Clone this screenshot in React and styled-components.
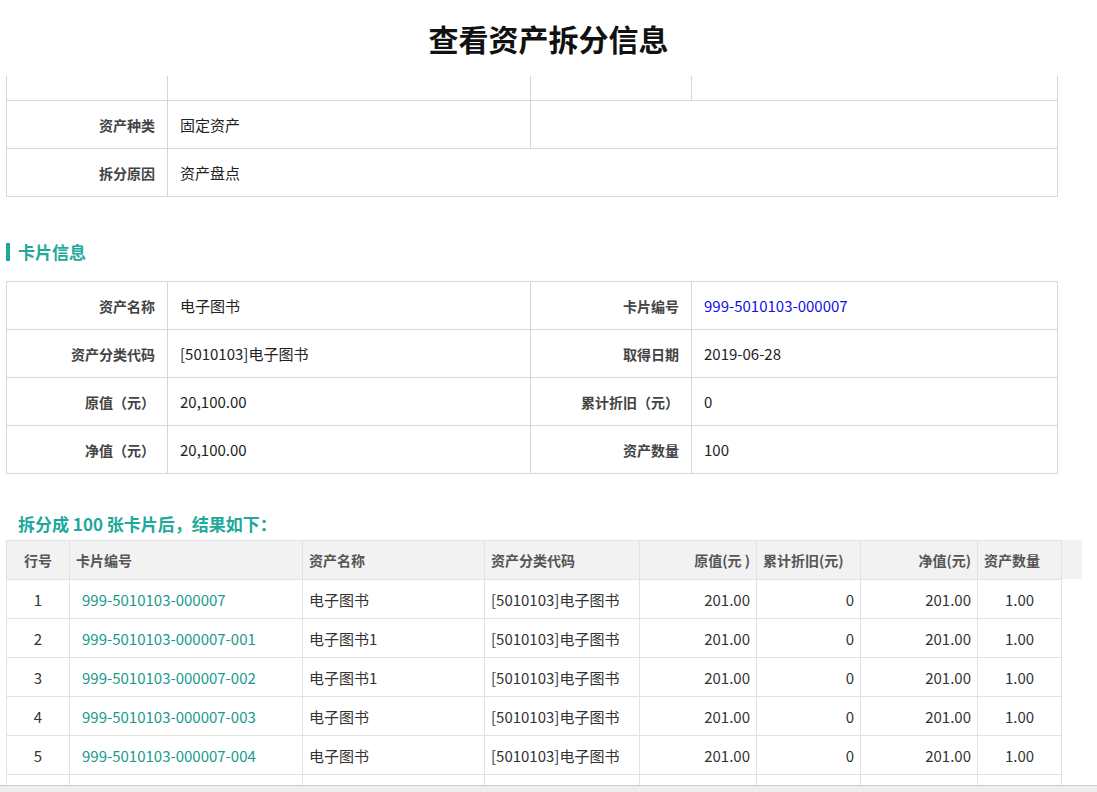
import React from 'react';
import styled, { createGlobalStyle } from 'styled-components';

const Global = createGlobalStyle`
  html, body { margin: 0; padding: 0; background: #fff; overflow: hidden; }
  body { font-family: "Microsoft YaHei", "Noto Sans CJK SC", "Noto Sans", sans-serif; color: #333; }
`;

const Page = styled.div`
  width: 1097px;
  height: 792px;
  display: flex;
  flex-direction: column;
  overflow: hidden;
`;

const Header = styled.h1`
  margin: 0;
  height: 76px;
  flex: none;
  display: flex;
  align-items: center;
  justify-content: center;
  font-size: 30px;
  font-weight: 700;
  color: #111;
`;

const Scroller = styled.div`
  flex: 1;
  overflow: hidden;
  padding: 0 0 0 6px;
`;

const Inner = styled.div`
  margin-top: -24px;
`;

const FormTable = styled.table`
  width: 1051px;
  border-collapse: collapse;
  table-layout: fixed;
  font-size: 15px;
  & td { border: 1px solid #d6d6d6; height: 47px; padding: 0 12px; }
`;

const Label = styled.td`
  text-align: right;
  font-weight: 700;
  color: #444;
  font-size: 14px;
`;

const Value = styled.td`
  color: ${p => (p.$link ? '#1010e0' : '#222')};
`;

const SectionTitle = styled.div`
  display: flex;
  align-items: center;
  gap: 8px;
  margin: ${p => p.$m || '42px 0 17px'};
  color: #20a99b;
  font-weight: 700;
  font-size: 17px;
  &::before {
    content: '';
    display: ${p => (p.$bar ? 'block' : 'none')};
    width: 4px;
    height: 18px;
    background: #20a99b;
  }
  padding-left: ${p => (p.$bar ? 0 : '12px')};
`;

const GridWrap = styled.div`
  display: flex;
  align-items: flex-start;
`;

const Grid = styled.table`
  border-collapse: collapse;
  table-layout: fixed;
  font-size: 15px;
  & th, & td { border: 1px solid #e2e2e2; height: 38px; padding: 0 6px; }
  & th { background: #f2f2f2; color: #555; font-weight: 700; text-align: left; font-size: 14px; }
`;

const Gutter = styled.div`
  width: 20px;
  height: 39px;
  background: #f2f2f2;
`;

const Cell = styled.td`
  text-align: ${p => p.$align || 'left'};
  color: ${p => (p.$link ? '#169a8c' : '#333')};
  padding-left: ${p => (p.$link ? '12px' : '6px')} !important;
`;

const HCell = styled.th`
  text-align: ${p => p.$align || 'left'} !important;
`;

const Pager = styled.div`
  height: 6px;
  background: #eee;
  border-top: 1px solid #ccc;
`;

const cols = [63, 233, 182, 155, 117, 104, 117, 84];
const rows = [
  ['1', '999-5010103-000007', '电子图书'],
  ['2', '999-5010103-000007-001', '电子图书1'],
  ['3', '999-5010103-000007-002', '电子图书1'],
  ['4', '999-5010103-000007-003', '电子图书'],
  ['5', '999-5010103-000007-004', '电子图书'],
];

export default function App() {
  return (
    <Page>
      <Global />
      <Header>查看资产拆分信息</Header>
      <Scroller>
        <Inner>
          <FormTable>
            <colgroup><col width="161" /><col width="363" /><col width="161" /><col width="366" /></colgroup>
            <tbody>
              <tr><Label /><Value /><Label /><Value /></tr>
              <tr><Label>资产种类</Label><Value>固定资产</Value><Value colSpan={2} /></tr>
              <tr><Label>拆分原因</Label><Value colSpan={3}>资产盘点</Value></tr>
            </tbody>
          </FormTable>
          <SectionTitle $bar>卡片信息</SectionTitle>
          <FormTable>
            <colgroup><col width="161" /><col width="363" /><col width="161" /><col width="366" /></colgroup>
            <tbody>
              <tr><Label>资产名称</Label><Value>电子图书</Value><Label>卡片编号</Label><Value $link>999-5010103-000007</Value></tr>
              <tr><Label>资产分类代码</Label><Value>[5010103]电子图书</Value><Label>取得日期</Label><Value>2019-06-28</Value></tr>
              <tr><Label>原值（元）</Label><Value>20,100.00</Value><Label>累计折旧（元）</Label><Value>0</Value></tr>
              <tr><Label>净值（元）</Label><Value>20,100.00</Value><Label>资产数量</Label><Value>100</Value></tr>
            </tbody>
          </FormTable>
          <SectionTitle $m="37px 0 4px">拆分成 100 张卡片后，结果如下：</SectionTitle>
          <GridWrap>
            <Grid>
              <colgroup>{cols.map((w, i) => <col key={i} width={w} />)}</colgroup>
              <thead>
                <tr>
                  <HCell $align="center">行号</HCell>
                  <HCell>卡片编号</HCell>
                  <HCell>资产名称</HCell>
                  <HCell>资产分类代码</HCell>
                  <HCell $align="right">原值(元 )</HCell>
                  <HCell>累计折旧(元)</HCell>
                  <HCell $align="right">净值(元)</HCell>
                  <HCell>资产数量</HCell>
                </tr>
              </thead>
              <tbody>
                {rows.map(r => (
                  <tr key={r[0]}>
                    <Cell $align="center">{r[0]}</Cell>
                    <Cell $link>{r[1]}</Cell>
                    <Cell>{r[2]}</Cell>
                    <Cell>[5010103]电子图书</Cell>
                    <Cell $align="right">201.00</Cell>
                    <Cell $align="right">0</Cell>
                    <Cell $align="right">201.00</Cell>
                    <Cell $align="center">1.00</Cell>
                  </tr>
                ))}
                <tr><Cell /><Cell /><Cell /><Cell /><Cell /><Cell /><Cell /><Cell /></tr>
              </tbody>
            </Grid>
            <Gutter />
          </GridWrap>
        </Inner>
      </Scroller>
      <Pager />
    </Page>
  );
}
